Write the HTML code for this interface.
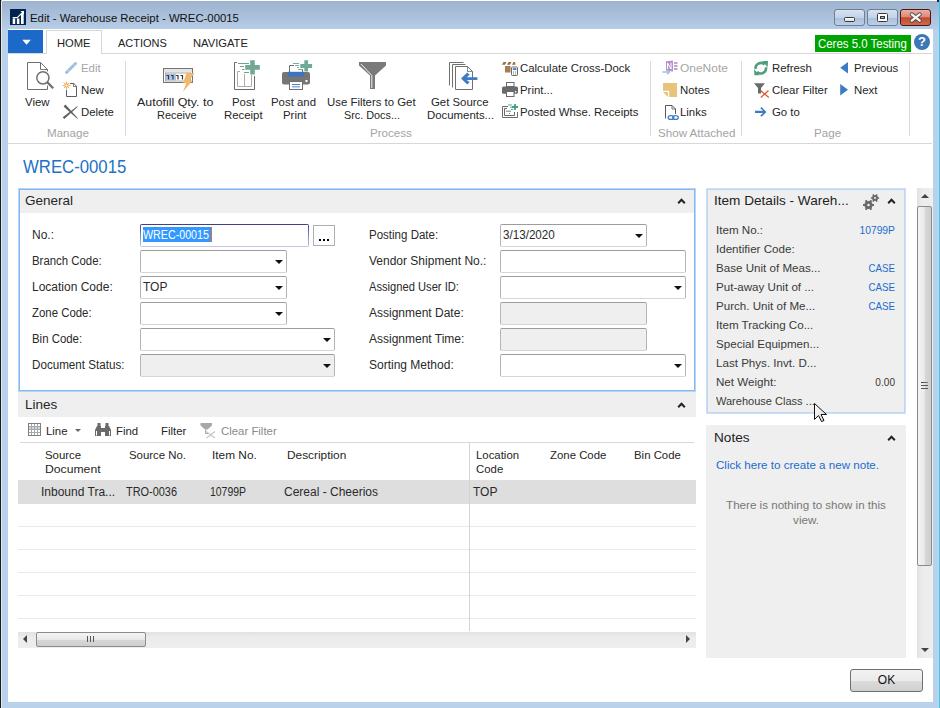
<!DOCTYPE html>
<html><head><meta charset="utf-8">
<style>
*{box-sizing:border-box;margin:0;padding:0}
html,body{width:940px;height:708px;overflow:hidden;background:#b9d1ea}
body{position:relative;font-family:"Liberation Sans",sans-serif;font-size:12px;color:#1e1e1e}
.a{position:absolute;white-space:nowrap}
.t{position:absolute;white-space:nowrap;line-height:14px;height:14px}
.rb{font-size:11.4px;color:#262626}
.grp{font-size:11.6px;color:#a3a3a3}
.sep{position:absolute;width:1px;background:#dadada}
.fld{position:absolute;height:23px;border:1px solid #b4b4b4;border-top-color:#9c9c9c;border-bottom-color:#d6d6d6;border-radius:2px;background:#fff}
.fld.dis{background:#efefef}
.dd{position:absolute;width:0;height:0;border-left:4px solid transparent;border-right:4px solid transparent;border-top:4px solid #111;top:9px}
.lbl{font-size:12px;color:#2a2a2a}
.fb{font-size:11.6px;color:#3a3a3a}
.blue{color:#1b6cce}
.rowl{position:absolute;left:18px;width:678px;height:1px;background:#e9e9e9}
</style></head><body>
<!-- window frame -->
<div class="a" style="left:0;top:0;width:940px;height:30px;background:linear-gradient(#9db2cc,#a9bfda 50%,#b8cee7)"></div><div class="a" style="left:2px;top:0;width:935px;height:1px;background:#fbfcfd"></div><div class="a" style="left:937px;top:0;width:3px;height:2px;background:#223"></div><div class="a" style="left:1px;top:1px;width:1px;height:707px;background:#e2eaf3"></div><div class="a" style="left:8px;top:702px;width:925px;height:6px;background:#b9d1ea"></div>
<div class="a" style="left:0;top:0;width:1px;height:708px;background:#1a1a1a"></div>
<div class="a" style="left:939px;top:0;width:1px;height:708px;background:#3fc9e8"></div>
<!-- client area -->
<div class="a" style="left:8px;top:29px;width:925px;height:673px;background:#fff"></div>

<!-- title bar -->
<svg class="a" style="left:10px;top:9px" width="16" height="16" viewBox="0 0 16 16">
<rect width="16" height="16" fill="#02234f"/>
<path d="M2.7 15V9.5h2.5V15zM6.9 15V9.5h2.5V15zM11 15V4h2.7v11z" fill="#fff"/>
<path d="M2.7 8.6H7.2L12.6 3.3" fill="none" stroke="#fff" stroke-width="1.1"/><path d="M10.5 2h3.5v3.5z" fill="#fff"/>
</svg>
<div class="t" style="left:30px;top:11px;font-size:11.35px;color:#111">Edit - Warehouse Receipt - WREC-00015</div>
<div class="a" style="left:834px;top:9px;width:31px;height:17px;border:1px solid #6c7d95;border-radius:3px;background:linear-gradient(#d6e2f0 0,#c3d3e7 50%,#a9bedb 51%,#bcd0e8 100%)"></div>
<div class="a" style="left:844px;top:17px;width:11px;height:5px;border:1px solid #3a3a3a;background:linear-gradient(#fff,#ddd);border-radius:1.5px"></div>
<div class="a" style="left:867px;top:9px;width:31px;height:17px;border:1px solid #6c7d95;border-radius:3px;background:linear-gradient(#d6e2f0 0,#c3d3e7 50%,#a9bedb 51%,#bcd0e8 100%)"></div>
<div class="a" style="left:877px;top:13px;width:11px;height:9px;border:1px solid #3a3a3a;background:#fff;border-radius:1.5px"></div><div class="a" style="left:880px;top:16px;width:5px;height:3px;border:1px solid #3a3a3a;background:#9ab4d4"></div>
<div class="a" style="left:900px;top:9px;width:31px;height:17px;border:1px solid #4a1616;border-radius:3px;background:linear-gradient(#eab0a2 0,#dc8a76 45%,#c24a2a 52%,#cf6a4e 100%)"></div>
<svg class="a" style="left:909px;top:12px" width="13" height="11" viewBox="0 0 13 11"><path d="M2.8 2.4L10.7 8.6M10.7 2.4L2.8 8.6" stroke="#4a4a4a" stroke-width="4" stroke-linecap="round"/><path d="M2.8 2.4L10.7 8.6M10.7 2.4L2.8 8.6" stroke="#f6f6f6" stroke-width="2.4" stroke-linecap="round"/></svg>

<!-- ribbon tabs -->
<div class="a" style="left:8px;top:30px;width:35px;height:23px;background:#1b69c9"></div>
<svg class="a" style="left:0;top:0" width="60" height="60"><path d="M22.3 39.8H30.8L26.55 44.8Z" fill="#fff"/></svg>
<div class="a" style="left:102px;top:53px;width:830px;height:1px;background:#d7d7d7"></div>
<div class="a" style="left:8px;top:53px;width:39px;height:1px;background:#d7d7d7"></div>
<div class="a" style="left:46px;top:30px;width:56px;height:24px;border:1px solid #d7d7d7;border-bottom:none;background:#fff"></div>
<div class="t rb" style="left:57px;top:36px;font-size:11.2px;color:#222">HOME</div>
<div class="t rb" style="left:118px;top:36px;font-size:11px;color:#222">ACTIONS</div>
<div class="t rb" style="left:193px;top:36px;font-size:11.2px;color:#222">NAVIGATE</div>
<div class="a" style="left:815px;top:35px;width:96px;height:17px;background:#00a400"></div>
<div class="t" style="left:818px;top:37px;font-size:12.3px;color:#fff;transform:scaleX(0.93);transform-origin:0 0">Ceres 5.0 Testing</div>
<div class="a" style="left:914px;top:34px;width:16px;height:16px;border-radius:50%;background:#3d77b6"></div>
<div class="t" style="left:914px;top:35px;width:16px;text-align:center;font-size:13px;font-weight:bold;color:#fff">?</div>

<!-- ribbon bottom -->
<div class="a" style="left:8px;top:143px;width:924px;height:1px;background:#d7d7d7"></div>

<!-- Manage group -->
<div class="t rb" style="left:25px;top:95px">View</div>
<div class="t rb" style="left:81px;top:61px;color:#a6a6a6">Edit</div>
<div class="t rb" style="left:81px;top:83px">New</div>
<div class="t rb" style="left:81px;top:105px">Delete</div>
<div class="t grp" style="left:47px;top:126px">Manage</div>
<div class="sep" style="left:125px;top:61px;height:75px"></div>

<!-- Process group -->
<div class="t rb" style="left:137px;top:95px;transform:scaleX(1.09);transform-origin:0 0">Autofill Qty. to</div>
<div class="t rb" style="left:157px;top:108px;transform:scaleX(0.96);transform-origin:0 0">Receive</div>
<div class="t rb" style="left:232px;top:95px">Post</div>
<div class="t rb" style="left:224px;top:108px">Receipt</div>
<div class="t rb" style="left:271px;top:95px">Post and</div>
<div class="t rb" style="left:283px;top:108px">Print</div>
<div class="t rb" style="left:327px;top:95px">Use Filters to Get</div>
<div class="t rb" style="left:344px;top:108px;transform:scaleX(0.95);transform-origin:0 0">Src. Docs...</div>
<div class="t rb" style="left:431px;top:95px">Get Source</div>
<div class="t rb" style="left:427px;top:108px">Documents...</div>
<div class="t rb" style="left:520px;top:61px">Calculate Cross-Dock</div>
<div class="t rb" style="left:520px;top:83px">Print...</div>
<div class="t rb" style="left:520px;top:105px">Posted Whse. Receipts</div>
<div class="t grp" style="left:370px;top:126px">Process</div>
<div class="sep" style="left:650px;top:61px;height:75px"></div>

<!-- Show Attached -->
<div class="t rb" style="left:680px;top:61px;color:#a6a6a6;transform:scaleX(1.05);transform-origin:0 0">OneNote</div>
<div class="t rb" style="left:680px;top:83px">Notes</div>
<div class="t rb" style="left:680px;top:105px">Links</div>
<div class="t grp" style="left:658px;top:126px">Show Attached</div>
<div class="sep" style="left:741px;top:61px;height:75px"></div>

<!-- Page group -->
<div class="t rb" style="left:772px;top:61px">Refresh</div>
<div class="t rb" style="left:772px;top:83px">Clear Filter</div>
<div class="t rb" style="left:772px;top:105px">Go to</div>
<div class="t grp" style="left:814px;top:126px">Page</div>
<div class="t rb" style="left:854px;top:61px">Previous</div>
<div class="t rb" style="left:854px;top:83px">Next</div>
<div class="sep" style="left:909px;top:61px;height:75px"></div>

<svg class="a" style="left:0;top:0" width="940" height="708" viewBox="0 0 940 708">
<!-- View -->
<path d="M27.5 62.5H40.5L47.5 69.5V89.5H27.5Z" fill="#fff" stroke="#707070"/>
<path d="M40.5 62.5V69.5H47.5" fill="none" stroke="#707070"/>
<circle cx="42.9" cy="77.8" r="8" fill="#fff"/>
<path d="M47.5 82.5L53.5 88.5" stroke="#fff" stroke-width="4.5"/>
<circle cx="42.9" cy="77.8" r="6.1" fill="none" stroke="#6e6e6e" stroke-width="1.5"/>
<path d="M47.3 82.3L53.2 88.2" stroke="#6e6e6e" stroke-width="2.3"/>
<!-- Edit pencil -->
<path d="M66.5 72.5L75.5 63.5" stroke="#9bbde2" stroke-width="2.8" stroke-linecap="round"/>
<path d="M67.8 71.2L68.6 70.4M73.6 65.4L74.2 64.8" stroke="#fff" stroke-width="1"/>
<!-- New -->
<path d="M70 83.5H73.8L76.5 86.2V96.5H66.5V90" fill="none" stroke="#5e5e5e"/>
<path d="M73.5 83.5V86.5H76.5" fill="none" stroke="#5e5e5e" stroke-width="0.8"/>
<circle cx="66.5" cy="85.5" r="1.6" fill="none" stroke="#eea84e" stroke-width="1.1"/>
<path d="M66.5 81.5V83.5M66.5 87.5V89.5M62.5 85.5H64.5M68.5 85.5H70.5M63.8 82.8L65 84M68 87L69.2 88.2M63.8 88.2L65 87M68 84L69.2 82.8" stroke="#eea84e" stroke-width="0.9"/>
<!-- Delete -->
<path d="M63.6 106.4L65.4 104.6L77.8 118.2L77.2 118.8Z" fill="#5e5e5e"/>
<path d="M62.7 117.2L64.3 119L77.8 106.8L77.2 106.2Z" fill="#5e5e5e"/>
<!-- Autofill -->
<rect x="163.5" y="68.5" width="29" height="14" fill="#fff" stroke="#747474"/>
<rect x="164" y="69" width="28" height="3.5" fill="#e4e4e4"/>
<rect x="165.5" y="73" width="25" height="8" fill="#fff" stroke="#9a9a9a" stroke-width="0.8"/>
<rect x="166" y="73.5" width="10" height="7" fill="#a9c5e6"/>
<path d="M166.5 75.5H168.5V79.5M171 75.5H173V79.5M176 75.5H178V79.5M180.5 75.5H182.5V79.5" fill="none" stroke="#3a3a3a" stroke-width="1.2"/>
<path d="M186.5 73L194.5 73L189.5 80.5L192.8 80.5L183 91.8L186.2 83.2L183 83.2Z" fill="#f0b86c"/>
<!-- Post Receipt -->
<path d="M237 62.5H234.5V89.5H254.5V76" fill="none" stroke="#6a6a6a"/>
<path d="M240 71.5H237.5V86.5H251.5V75M244.5 74V86.5" fill="none" stroke="#ababab"/>
<path d="M238 63.5H249M240 66.5H244M242 69.5H244.5M244 72.5H249" stroke="#6aa68c" stroke-width="1"/>
<path d="M250.2 60.3H254.8V65H259.8V69.8H254.8V74.6H250.2V69.8H245.2V65H250.2Z" fill="#70aa92"/>
<!-- Post and Print -->
<path d="M294 65.5H289.5V73M302.5 69V73" fill="none" stroke="#707070"/>
<rect x="282" y="72" width="28" height="12.5" rx="2" fill="#767676"/>
<rect x="288" y="71.8" width="16" height="4.7" fill="#3b75c1"/>
<rect x="289.5" y="81.5" width="13" height="8" fill="#fff" stroke="#707070"/>
<path d="M292 84.5H300M292 86.8H300" stroke="#3b75c1" stroke-width="0.9"/>
<rect x="305.5" y="80" width="2" height="2" fill="#fff"/>
<path d="M293 63.5H299M295 65.5H299M297 67.5H299M298 69.5H303" stroke="#6aa68c" stroke-width="0.9"/>
<path d="M304.3 60.3H308.1V64.1H312.1V67.9H308.1V71.5H304.3V67.9H300.3V64.1H304.3Z" fill="#70aa92"/>
<!-- Funnel -->
<path d="M359 62H386V65.5L375 75.5V89H370V75.5L359 65.5Z" fill="#7a7a7a"/>
<path d="M361 64L371.8 75.5V88" fill="none" stroke="#fff" stroke-width="0.9"/>
<!-- Get Source Documents -->
<path d="M449.5 85.5V62.5H463.5" fill="none" stroke="#707070"/>
<path d="M452.5 87.5V64.5H465.5" fill="none" stroke="#707070"/>
<path d="M455.5 66.5H467.5L472.5 71.5V89.5H455.5Z" fill="#fff" stroke="#707070"/>
<path d="M467.5 66.5V71.5H472.5" fill="none" stroke="#707070" stroke-width="0.8"/>
<path d="M461 78.5L467.3 72.6L469.6 74.8L466.8 77.2H477.4V79.9H466.8L469.6 82.3L467.3 84.4Z" fill="#3d7cc4"/>
<!-- Calculate Cross-Dock -->
<rect x="505" y="66" width="5.5" height="6.5" fill="#a97b50"/>
<path d="M502 64.8L503.5 62H506.5L505 64.8ZM507 64.8L508.5 62H511.5L510 64.8ZM512 64.8L513.5 62H515L515.5 64.8Z" fill="#9a6e45"/>
<rect x="511.5" y="67" width="6" height="8.5" rx="0.8" fill="#fff" stroke="#6a6a6a"/>
<rect x="512.8" y="68.2" width="3.6" height="1.8" fill="#3d7cc4"/>
<path d="M513 72H514M515.2 72H516.2M513 74H514M515.2 74H516.2" stroke="#555" stroke-width="0.9"/>
<!-- Print small -->
<rect x="506.5" y="82.5" width="7.5" height="4" fill="#fff" stroke="#6a6a6a"/>
<rect x="502" y="86.4" width="16" height="7.4" rx="1.5" fill="#6a6a6a"/>
<rect x="506.5" y="91.5" width="7.5" height="5" fill="#fff" stroke="#6a6a6a"/>
<rect x="515" y="91" width="1.4" height="1.4" fill="#fff"/>
<!-- Posted Whse Receipts -->
<path d="M508 106.5H502.5V117.5H517.5V112" fill="none" stroke="#6a6a6a"/>
<path d="M507 108.5H504.5V115.5H514.5V112" fill="none" stroke="#6a6a6a"/>
<path d="M506 111.2H511M509 113.5H510" stroke="#6a6a6a" stroke-width="0.9"/>
<path d="M508 105H512M510 107.2H513M511 109.4H513" stroke="#3fa27e" stroke-width="0.9"/>
<path d="M514.1 104H515.9V106.1H518V107.9H515.9V110H514.1V107.9H512V106.1H514.1Z" fill="#3fa27e"/>
<!-- OneNote (disabled) -->
<path d="M666 61.2L673 60.5V71.5L666 70.8Z" fill="#b991cc"/>
<path d="M667.5 63V69M667.5 63L671 69M671 63V69" fill="none" stroke="#fff" stroke-width="1"/>
<path d="M674 62H677.5V64H674ZM674 65H677.5V67H674ZM674 68H677.5V70H674Z" fill="#c2a2d4"/>
<path d="M662.5 72H669M667 69.8L669.5 72L667 74.2" fill="none" stroke="#9ec0e2" stroke-width="1.4"/>
<!-- Notes -->
<path d="M663 83H677V97H669.2V90.8H663Z" fill="#e9c27c"/><path d="M663 92.1H667.9V97Z" fill="#e9c27c"/>
<!-- Links -->
<path d="M672 105.5H665.5V118.5M672 105.5L675.5 109V114" fill="none" stroke="#5a5a5a"/>
<path d="M672 105.5V109H675.5" fill="none" stroke="#5a5a5a" stroke-width="0.8"/>
<ellipse cx="671" cy="117.5" rx="2.8" ry="1.9" fill="none" stroke="#3d7cc4" stroke-width="1.3"/>
<ellipse cx="675.5" cy="117.5" rx="2.8" ry="1.9" fill="none" stroke="#3d7cc4" stroke-width="1.3"/>
<!-- Refresh -->
<path d="M755.7 69.1A5.2 5.2 0 0 1 764.5 64.5" fill="none" stroke="#4f9e7c" stroke-width="2.6"/>
<path d="M762.2 61L768 61L767.6 67.2Z" fill="#4f9e7c"/>
<path d="M765.9 67.3A5.2 5.2 0 0 1 757.1 71.9" fill="none" stroke="#4f9e7c" stroke-width="2.6"/>
<path d="M754 69.2L754.4 75.3L759.8 75.3Z" fill="#4f9e7c"/>
<!-- Clear Filter -->
<path d="M754 83.3H765L761 88V93.6H758V88Z" fill="#6a6a6a"/>
<path d="M760.5 90.5L768.8 97.5M768.5 90.5L760.8 97.5" stroke="#e05a30" stroke-width="1.3"/>
<!-- Go to -->
<path d="M755 110.8H763.2L760.2 108.2L761.6 107L766.4 111.9L761.6 116.8L760.2 115.6L763.2 113H755Z" fill="#3d7cc4"/>
<!-- Prev / Next -->
<path d="M848 62V73.6L840.2 67.8Z" fill="#3d7cc4"/>
<path d="M840.2 84V95.5L848 89.8Z" fill="#3d7cc4"/>
</svg>

<!-- page title -->
<div class="a" style="left:23px;top:156px;font-size:18px;line-height:22px;color:#2271c4;transform:scaleX(0.93);transform-origin:0 0">WREC-00015</div>

<!-- General section -->
<div class="a" style="left:18px;top:188px;width:678px;height:204px;border:1px solid #b6d5f9;box-shadow:inset 0 0 0 1px #84b6f4;background:#fff"></div>
<div class="a" style="left:20px;top:190px;width:674px;height:23px;background:#efefef"></div>
<div class="t" style="left:25px;top:194px;font-size:13.5px;color:#262626">General</div>
<svg class="a" style="left:677px;top:198px" width="9" height="6" viewBox="0 0 9 6"><path d="M1.2 5.2L4.5 1.8L7.8 5.2" fill="none" stroke="#222" stroke-width="2"/></svg>

<div class="t lbl" style="left:32px;top:228px">No.:</div>
<div class="t lbl" style="left:32px;top:254px;transform:scaleX(0.95);transform-origin:0 0">Branch Code:</div>
<div class="t lbl" style="left:32px;top:280px">Location Code:</div>
<div class="t lbl" style="left:32px;top:306px;transform:scaleX(0.95);transform-origin:0 0">Zone Code:</div>
<div class="t lbl" style="left:32px;top:332px;transform:scaleX(0.95);transform-origin:0 0">Bin Code:</div>
<div class="t lbl" style="left:32px;top:358px;transform:scaleX(0.97);transform-origin:0 0">Document Status:</div>

<div class="a" style="left:140px;top:224px;width:169px;height:23px;border-radius:2px;background:linear-gradient(#3f3b8a 0,#6a67a8 30%,#c8c8dc 100%)"></div><div class="a" style="left:141px;top:225px;width:167px;height:21px;background:#fff"></div>
<div class="a" style="left:143px;top:227px;width:68px;height:15px;background:#3399ff"></div>
<div class="a" style="left:211px;top:227px;width:1px;height:15px;background:#e07020"></div>
<div class="t" style="left:143px;top:228px;color:#fff;font-size:12px;transform:scaleX(0.89);transform-origin:0 0">WREC-00015</div>
<div class="a" style="left:313px;top:225px;width:22px;height:21px;border:1px solid #a9afb5;background:#fff"></div>
<div class="a" style="left:319px;top:239px;width:2px;height:2px;background:#000;box-shadow:4px 0 0 #000,8px 0 0 #000"></div>

<div class="fld" style="left:140px;top:250px;width:147px"><div class="dd" style="left:134px"></div></div>
<div class="fld" style="left:140px;top:276px;width:147px"><div class="dd" style="left:134px"></div></div>
<div class="t lbl" style="left:143px;top:280px">TOP</div>
<div class="fld" style="left:140px;top:302px;width:147px"><div class="dd" style="left:134px"></div></div>
<div class="fld" style="left:140px;top:328px;width:195px"><div class="dd" style="left:182px"></div></div>
<div class="fld dis" style="left:140px;top:354px;width:195px"><div class="dd" style="left:182px"></div></div>

<div class="t lbl" style="left:369px;top:228px;transform:scaleX(0.96);transform-origin:0 0">Posting Date:</div>
<div class="t lbl" style="left:369px;top:254px">Vendor Shipment No.:</div>
<div class="t lbl" style="left:369px;top:280px;transform:scaleX(0.93);transform-origin:0 0">Assigned User ID:</div>
<div class="t lbl" style="left:369px;top:306px">Assignment Date:</div>
<div class="t lbl" style="left:369px;top:332px">Assignment Time:</div>
<div class="t lbl" style="left:369px;top:358px">Sorting Method:</div>

<div class="fld" style="left:500px;top:224px;width:147px"><div class="dd" style="left:134px"></div></div>
<div class="t lbl" style="left:503px;top:228px;transform:scaleX(0.97);transform-origin:0 0">3/13/2020</div>
<div class="fld" style="left:500px;top:250px;width:186px"></div>
<div class="fld" style="left:500px;top:276px;width:186px"><div class="dd" style="left:173px"></div></div>
<div class="fld dis" style="left:500px;top:302px;width:147px"></div>
<div class="fld dis" style="left:500px;top:328px;width:147px"></div>
<div class="fld" style="left:500px;top:354px;width:186px"><div class="dd" style="left:173px"></div></div>

<!-- Lines section -->
<div class="a" style="left:18px;top:392px;width:678px;height:25px;background:#efefef"></div>
<div class="t" style="left:25px;top:398px;font-size:13.5px;color:#262626">Lines</div>
<svg class="a" style="left:677px;top:402px" width="9" height="6" viewBox="0 0 9 6"><path d="M1.2 5.2L4.5 1.8L7.8 5.2" fill="none" stroke="#222" stroke-width="2"/></svg>

<svg class="a" style="left:28px;top:423px" width="13" height="13" viewBox="0 0 13 13"><rect x="0.5" y="0.5" width="12" height="12" fill="#fff"/><rect x="1" y="3.5" width="11" height="3" fill="#c3d8f0"/><path d="M0.5 3.5h12M0.5 6.5h12M0.5 9.5h12M3.5 0.5v12M6.5 0.5v12M9.5 0.5v12" stroke="#a8a8a8"/><rect x="0.5" y="0.5" width="12" height="12" fill="none" stroke="#7e7e7e"/></svg>
<div class="t rb" style="left:46px;top:424px">Line</div>
<div class="a" style="left:75px;top:429px;width:0;height:0;border-left:3.5px solid transparent;border-right:3.5px solid transparent;border-top:3.5px solid #666"></div>
<svg class="a" style="left:95px;top:423px" width="16" height="13" viewBox="0 0 16 13"><path d="M2.5 0h3v3h-3zM10.5 0h3v3h-3z" fill="#6a6a6a"/><path d="M0 13V7L2 3h4v10zM16 13V7L14 3h-4v10zM6 5h4v4H6z" fill="#6a6a6a"/><path d="M1.5 8v4.5M14.5 8v4.5" stroke="#fff" stroke-width="1"/></svg>
<div class="t rb" style="left:116px;top:424px">Find</div>
<div class="t rb" style="left:161px;top:424px">Filter</div>
<svg class="a" style="left:0;top:0" width="300" height="460"><path d="M200.5 423H212V425.5L207.5 429.5H205L200.5 425.5Z" fill="#a8a8a8"/><path d="M205.5 429.5V433.5H208" fill="none" stroke="#a8a8a8" stroke-width="1"/><path d="M206 431.5L215 438M215 431.5L206.5 438" stroke="#c4c4c4" stroke-width="1.1"/></svg>
<div class="t rb" style="left:221px;top:424px;color:#8a8a8a">Clear Filter</div>
<div class="a" style="left:20px;top:442px;width:674px;height:1px;background:#d9d9d9"></div>

<div class="t rb" style="left:45px;top:448px">Source</div>
<div class="t rb" style="left:45px;top:462px;transform:scaleX(1.07);transform-origin:0 0">Document</div>
<div class="t rb" style="left:129px;top:448px">Source No.</div>
<div class="t rb" style="left:212px;top:448px;transform:scaleX(1.04);transform-origin:0 0">Item No.</div>
<div class="t rb" style="left:287px;top:448px;transform:scaleX(1.04);transform-origin:0 0">Description</div>
<div class="t rb" style="left:476px;top:448px">Location</div>
<div class="t rb" style="left:476px;top:462px">Code</div>
<div class="t rb" style="left:550px;top:448px">Zone Code</div>
<div class="t rb" style="left:634px;top:448px">Bin Code</div>

<div class="a" style="left:18px;top:480px;width:678px;height:24px;background:#dedede"></div>
<div class="t lbl" style="left:41px;top:485px">Inbound Tra...</div>
<div class="t lbl" style="left:126px;top:485px;transform:scaleX(0.91);transform-origin:0 0">TRO-0036</div>
<div class="t lbl" style="left:210px;top:485px;transform:scaleX(0.87);transform-origin:0 0">10799P</div>
<div class="t lbl" style="left:284px;top:485px">Cereal - Cheerios</div>
<div class="t lbl" style="left:473px;top:485px">TOP</div>
<div class="rowl" style="top:526px"></div>
<div class="rowl" style="top:549px"></div>
<div class="rowl" style="top:572px"></div>
<div class="rowl" style="top:595px"></div>
<div class="rowl" style="top:618px"></div>
<div class="a" style="left:469px;top:443px;width:1px;height:188px;background:#d4d4d4"></div>

<!-- horizontal scrollbar -->
<div class="a" style="left:18px;top:632px;width:678px;height:16px;background:linear-gradient(#e2e2e2,#ececec 35%,#eeeeee)"></div>
<div class="a" style="left:23px;top:635px;width:0;height:0;border-top:4px solid transparent;border-bottom:4px solid transparent;border-right:4px solid #444"></div>
<div class="a" style="left:686px;top:635px;width:0;height:0;border-top:4px solid transparent;border-bottom:4px solid transparent;border-left:4px solid #444"></div>
<div class="a" style="left:36px;top:632px;width:110px;height:15px;border:1px solid #8b8b8b;border-radius:2px;background:linear-gradient(#f4f4f4 0,#e9e9e9 50%,#d7d7d7 51%,#cfcfcf 100%)"></div>
<div class="a" style="left:87px;top:636px;width:1px;height:6px;background:#555;box-shadow:3px 0 0 #555,6px 0 0 #555"></div>

<!-- Factbox: item details -->
<div class="a" style="left:706px;top:188px;width:200px;height:226px;border:1px solid #cfe1f6;box-shadow:inset 0 0 0 1px #bcd6f3;background:#efefef"></div>
<div class="t" style="left:714px;top:194px;font-size:13.6px;color:#222">Item Details - Wareh...</div>
<svg class="a" style="left:0;top:0" width="940" height="708" viewBox="0 0 940 708"><circle cx="868.5" cy="205" r="2.65" fill="none" stroke="#6a6a6a" stroke-width="2.70"/><path d="M871.70 205.00L874.00 205.00M870.10 207.77L871.25 209.76M866.90 207.77L865.75 209.76M865.30 205.00L863.00 205.00M866.90 202.23L865.75 200.24M870.10 202.23L871.25 200.24" stroke="#6a6a6a" stroke-width="2.0"/>
<circle cx="875" cy="198" r="2.00" fill="none" stroke="#6a6a6a" stroke-width="2.00"/><path d="M877.40 198.00L879.10 198.00M876.20 200.08L877.05 201.55M873.80 200.08L872.95 201.55M872.60 198.00L870.90 198.00M873.80 195.92L872.95 194.45M876.20 195.92L877.05 194.45" stroke="#6a6a6a" stroke-width="1.6"/></svg>
<svg class="a" style="left:887px;top:198px" width="9" height="6" viewBox="0 0 9 6"><path d="M1.2 5.2L4.5 1.8L7.8 5.2" fill="none" stroke="#222" stroke-width="2"/></svg>
<div class="t fb" style="left:716px;top:223px">Item No.:</div>
<div class="t fb blue" style="left:800px;top:223px;width:95px;text-align:right;transform:scaleX(0.89);transform-origin:100% 0">10799P</div>
<div class="t fb" style="left:716px;top:242px">Identifier Code:</div>
<div class="t fb" style="left:716px;top:261px">Base Unit of Meas...</div>
<div class="t fb blue" style="left:800px;top:261px;width:95px;text-align:right;transform:scaleX(0.84);transform-origin:100% 0">CASE</div>
<div class="t fb" style="left:716px;top:280px">Put-away Unit of ...</div>
<div class="t fb blue" style="left:800px;top:280px;width:95px;text-align:right;transform:scaleX(0.84);transform-origin:100% 0">CASE</div>
<div class="t fb" style="left:716px;top:299px">Purch. Unit of Me...</div>
<div class="t fb blue" style="left:800px;top:299px;width:95px;text-align:right;transform:scaleX(0.84);transform-origin:100% 0">CASE</div>
<div class="t fb" style="left:716px;top:318px">Item Tracking Co...</div>
<div class="t fb" style="left:716px;top:337px">Special Equipmen...</div>
<div class="t fb" style="left:716px;top:356px">Last Phys. Invt. D...</div>
<div class="t fb" style="left:716px;top:375px">Net Weight:</div>
<div class="t fb" style="left:800px;top:375px;width:95px;text-align:right;transform:scaleX(0.87);transform-origin:100% 0">0.00</div>
<div class="t fb" style="left:716px;top:394px;transform:scaleX(0.95);transform-origin:0 0">Warehouse Class ...</div>

<!-- Notes factbox -->
<div class="a" style="left:706px;top:425px;width:200px;height:233px;background:#efefef"></div>
<div class="t" style="left:714px;top:431px;font-size:13.6px;color:#222">Notes</div>
<svg class="a" style="left:887px;top:435px" width="9" height="6" viewBox="0 0 9 6"><path d="M1.2 5.2L4.5 1.8L7.8 5.2" fill="none" stroke="#222" stroke-width="2"/></svg>
<div class="t blue" style="left:716px;top:458px;font-size:11.6px">Click here to create a new note.</div>
<div class="a" style="left:706px;top:497px;width:200px;text-align:center;font-size:11.6px;line-height:15px;color:#777;white-space:normal">There is nothing to show in this<br>view.</div>

<!-- vertical scrollbar -->
<div class="a" style="left:917px;top:188px;width:16px;height:470px;background:linear-gradient(90deg,#e2e2e2,#ececec 35%,#eeeeee)"></div>
<div class="a" style="left:921px;top:194px;width:0;height:0;border-left:4px solid transparent;border-right:4px solid transparent;border-bottom:4px solid #444"></div>
<div class="a" style="left:921px;top:648px;width:0;height:0;border-left:4px solid transparent;border-right:4px solid transparent;border-top:4px solid #444"></div>
<div class="a" style="left:917px;top:206px;width:15px;height:360px;border:1px solid #8b8b8b;border-radius:2px;background:linear-gradient(90deg,#f4f4f4 0,#e9e9e9 50%,#d7d7d7 51%,#cfcfcf 100%)"></div>
<div class="a" style="left:921px;top:382px;width:7px;height:1px;background:linear-gradient(90deg,#333,#888);box-shadow:0 3px 0 #555,0 6px 0 #555"></div>

<!-- cursor -->
<svg class="a" style="left:814px;top:403px" width="13" height="20" viewBox="0 0 13 20"><defs><linearGradient id="cg" x1="0" y1="0" x2="1" y2="1"><stop offset="0" stop-color="#fff"/><stop offset="1" stop-color="#d8d8d8"/></linearGradient></defs><path d="M0.5 0.5v16l4-4 3 6 2.5-1-3-6h5.5z" fill="url(#cg)" stroke="#111"/></svg>

<!-- OK button -->
<div class="a" style="left:850px;top:669px;width:73px;height:23px;border:1px solid #707070;border-radius:3px;background:linear-gradient(#f2f2f2 0,#ebebeb 50%,#dddddd 51%,#cfcfcf 100%)"></div>
<div class="t" style="left:850px;top:673px;width:73px;text-align:center;font-size:12px;color:#111">OK</div>
</body></html>
